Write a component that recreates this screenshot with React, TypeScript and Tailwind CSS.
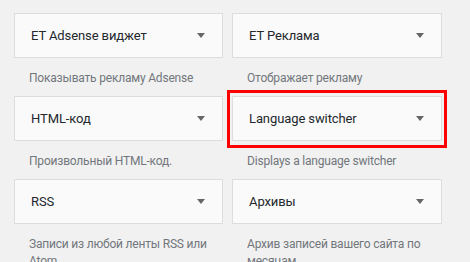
const widgets = [
  { title: 'ET Adsense виджет', desc: 'Показывать рекламу Adsense' },
  { title: 'ET Реклама', desc: 'Отображает рекламу' },
  { title: 'HTML-код', desc: 'Произвольный HTML-код.' },
  { title: 'Language switcher', desc: 'Displays a language switcher', highlight: true },
  { title: 'RSS', desc: 'Записи из любой ленты RSS или Atom.' },
  { title: 'Архивы', desc: 'Архив записей вашего сайта по месяцам.' },
];

function Arrow() {
  return (
    <svg width="8" height="5" viewBox="0 0 8 5" className="shrink-0">
      <path d="M0 0h8L4 5z" fill="#666" />
    </svg>
  );
}

export default function App() {
  return (
    <div
      className="w-[470px] h-[262px] overflow-hidden bg-[#f1f1f1] pl-[14px] pt-[13px]"
      style={{ fontFamily: 'Roboto, "Noto Sans", sans-serif' }}
    >
      <div className="grid grid-cols-[209px_210px] gap-x-[9px]">
        {widgets.map((w) => (
          <div key={w.title} className="h-[83px]">
            <div className="relative">
              <div className="h-[45px] flex items-center justify-between border border-[#dddddd] bg-[#fafafa] pl-[16px] pr-[17px]">
                <span className="text-[13px] tracking-[-0.1px] text-[#23282d]">{w.title}</span>
                <Arrow />
              </div>
              {w.highlight && (
                <span className="absolute -left-[5px] -right-[5px] -top-[6px] -bottom-[7px] border-[3px] border-[#ff0000]" />
              )}
            </div>
            <p className="pt-[12px] pl-[15px] pr-[12px] text-[12px] tracking-[-0.2px] leading-[17px] text-[#72777c]">{w.desc}</p>
          </div>
        ))}
      </div>
    </div>
  );
}
